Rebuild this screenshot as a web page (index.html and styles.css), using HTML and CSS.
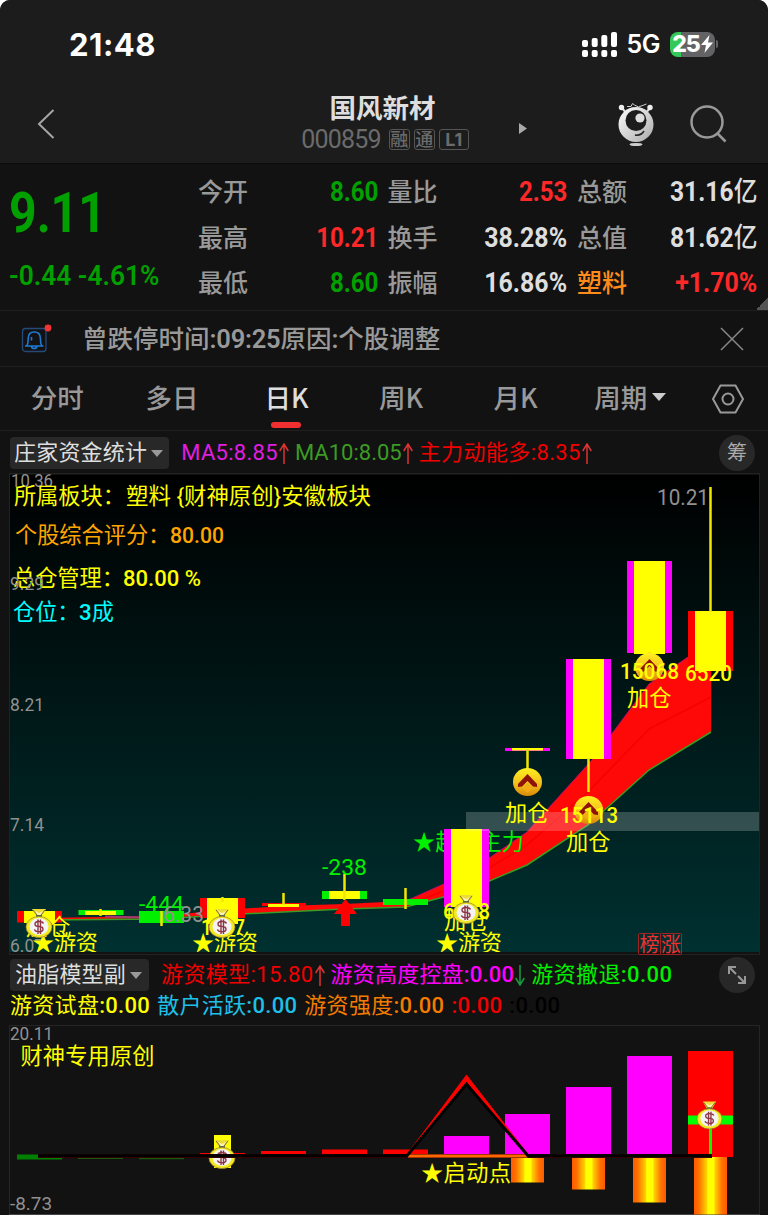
FILE: index.html
```html
<!DOCTYPE html>
<html lang="zh-CN">
<head>
  <meta charset="UTF-8" />
  <meta name="viewport" content="width=device-width, initial-scale=1.0"/>
  <title>国风新材 000859</title>
  <link rel="stylesheet" href="styles.css">
</head>

<body>
  <div class="screen">
    <header>
      <!-- Status bar -->
      <div class="status-bar">
        <span class="clock">21:48</span>
        <div class="status-icons">
          <svg class="signal" width="36" height="25" viewBox="0 0 36 25" fill="#fff">
            <rect x="0" y="8" width="6" height="7" rx="2"/><rect x="9.7" y="6" width="6" height="9" rx="2"/>
            <rect x="19.3" y="3" width="6" height="12" rx="2"/><rect x="29" y="0" width="6" height="15" rx="2"/>
            <rect x="0" y="18" width="6" height="7" rx="2"/><rect x="9.7" y="18" width="6" height="7" rx="2"/>
            <rect x="19.3" y="18" width="6" height="7" rx="2"/><rect x="29" y="18" width="6" height="7" rx="2"/>
          </svg>
          <span class="network">5G</span>
          <span class="battery">25<svg width="12" height="18" viewBox="0 0 12 18"><path d="M8.5 0 0 10h5L3.5 18 12 7.500H7z" fill="#fff"/></svg></span>
          <span class="battery-tip"></span>
        </div>
      </div>

      <!-- Stock title -->
      <div class="title-bar">
        <svg class="back" width="18" height="30" viewBox="0 0 18 30"><path d="M16.500 1 2 15l14.500 14" fill="none" stroke="#a5a5a5" stroke-width="2"/></svg>
        <div class="stock">
          <h1>国风新材</h1>
          <div class="stock-code"><span class="code">000859</span><i class="tag">融</i><i class="tag">通</i><i class="tag wide">L1</i></div>
        </div>
        <svg class="next" width="8" height="11" viewBox="0 0 8 11"><path d="M0 0l8 5.500L0 11z" fill="#aaa"/></svg>
        <svg class="robot" width="36" height="45" viewBox="0 0 36 45">
          <defs>
            <linearGradient id="ball" x1="0" y1="0" x2="1" y2="1"><stop offset="0" stop-color="#fff"/><stop offset="1" stop-color="#aaa"/></linearGradient>
          </defs>
          <path d="M4 6l5 6M32 6l-5 6" stroke="#ddd" stroke-width="2"/>
          <circle cx="3.500" cy="5.500" r="2.700" fill="#eee"/><circle cx="32" cy="5.500" r="2.700" fill="#eee"/>
          <path d="M9 4.500h4l1.500-3 2 1.500 4 2 8-3" fill="none" stroke="#ccc" stroke-width="1"/>
          <circle cx="18" cy="22.500" r="17.500" fill="url(#ball)"/>
          <circle cx="18" cy="18.500" r="10.500" fill="#1c1c1c"/>
          <circle cx="22" cy="16" r="4.600" fill="#ddd"/>
          <path d="M17 33q6 1 9-4" fill="none" stroke="#222" stroke-width="1.500"/>
          <ellipse cx="18" cy="42.500" rx="6.500" ry="1.600" fill="#ccc"/>
        </svg>
        <svg class="search" width="37" height="38" viewBox="0 0 37 38" fill="none" stroke="#999" stroke-width="2.500"><circle cx="17" cy="17" r="15.500"/><path d="M27.500 28.500l8 8"/></svg>
      </div>
    </header>

    <!-- Quote -->
    <section class="quote">
      <div class="price-box">
        <div class="price">9.11</div>
        <div class="change">-0.44 -4.61%</div>
      </div>
      <div class="quote-grid">
        <div class="cell"><span>今开</span><b class="down">8.60</b></div>
        <div class="cell"><span>量比</span><b class="up">2.53</b></div>
        <div class="cell"><span>总额</span><b class="amount">31.16<em>亿</em></b></div>
        <div class="cell"><span>最高</span><b class="up">10.21</b></div>
        <div class="cell"><span>换手</span><b class="percent">38.28%</b></div>
        <div class="cell"><span>总值</span><b class="amount">81.62<em>亿</em></b></div>
        <div class="cell"><span>最低</span><b class="down">8.60</b></div>
        <div class="cell"><span>振幅</span><b class="percent">16.86%</b></div>
        <div class="cell"><span class="sector">塑料</span><b class="up percent">+1.70%</b></div>
      </div>
    </section>

    <!-- Notice -->
    <section class="notice">
      <svg width="32" height="30" viewBox="0 0 32 30" fill="none">
        <rect x="1.500" y="4.500" width="23.500" height="23" rx="3" stroke="#254a78" stroke-width="1.300"/>
        <path d="M4 22h18.500M6 21.500c1.200-2 1.200-4 1.200-7 0-4.500 2.700-6.500 6-6.500s6.200 2 6.200 6.500c0 3 0 5 1.200 7M10.500 22.500c.5 2.700 4.800 2.700 5.300 0M10.500 16.500v-3.500" stroke="#1f7ad6" stroke-width="1.600"/>
        <circle cx="27" cy="4" r="3.400" fill="#f03535"/>
      </svg>
      <p>曾跌停时间<b>:09:25</b>原因<b>:</b>个股调整</p>
      <svg class="close" width="24" height="24" viewBox="0 0 24 24"><path d="M1 1l22 22M23 1L1 23" stroke="#888" stroke-width="1.500"/></svg>
    </section>

    <!-- Period tabs -->
    <nav class="tabs">
      <a>分时</a>
      <a>多日</a>
      <a class="active">日K</a>
      <a>周K</a>
      <a>月K</a>
      <a>周期<i class="caret"></i></a>
      <svg width="32" height="30" viewBox="0 0 32 30" fill="none" stroke="#999" stroke-width="2"><path d="M8.500 1.500h15L31 15l-7.500 13.500h-15L1 15z"/><circle cx="16" cy="15" r="5.500"/></svg>
    </nav>

    <!-- Main chart -->
    <div class="indicator main-indicator">
      <span class="select">庄家资金统计<i class="caret"></i></span>
      <span class="value ma5">MA5:8.85</span><svg class="arrow" width="10" height="21" viewBox="0 0 10 21"><path d="M5 21V1M.7 8 5 1l4.300 7" stroke="#d33"/></svg>
      <span class="value ma10">MA10:8.05</span><svg class="arrow" width="10" height="21" viewBox="0 0 10 21"><path d="M5 21V1M.7 8 5 1l4.300 7" stroke="#d33"/></svg>
      <span class="value red">主力动能多:8.35</span><svg class="arrow" width="10" height="21" viewBox="0 0 10 21"><path d="M5 21V1M.7 8 5 1l4.300 7" stroke="#d33"/></svg>
      <span class="round">筹</span>
    </div>

    <svg class="chart" width="751" height="483" viewBox="9 473 751 483">
      <defs>
        <linearGradient id="sea" x1="0" y1="0" x2="0" y2="1"><stop offset="0" stop-color="#000"/><stop offset="1" stop-color="#003030"/></linearGradient>
        <linearGradient id="gold" x1="0" y1="0" x2="0" y2="1"><stop offset="0" stop-color="#ffef20"/><stop offset=".55" stop-color="#f3bf1c"/><stop offset="1" stop-color="#d98a08"/></linearGradient>
        <clipPath id="plot"><rect x="10" y="475" width="749" height="477"/></clipPath>
        <symbol id="bag" viewBox="0 0 28 30">
          <path d="M7 1h14l-4 7h-6z" fill="#eddc35"/>
          <path d="M10 3l4 2 4-2-2 4h-4z" fill="#f8f4b8"/>
          <path d="M8 2l4 5M20 2l-4 5" stroke="#866a28"/>
          <rect x="11" y="7" width="6" height="3" fill="#577044"/>
          <ellipse cx="14" cy="19" rx="13" ry="10.500" fill="#f2ea20" stroke="#9b7b3b" stroke-width=".7"/>
          <ellipse cx="14" cy="18.500" rx="9.500" ry="8.500" fill="#f3f3f3"/>
          <path d="M18.500 15.500q-1-2-4.500-2-4 0-4 2.500t4 2.500 4 2.700-4 2.500q-4 0-4.500-2.300M13 11.500v14.500M15.500 11.500v14.500" fill="none" stroke="#8e3545" stroke-width="1.400"/>
        </symbol>
        <symbol id="coin" viewBox="0 0 29 28">
          <ellipse cx="14.500" cy="14" rx="14.500" ry="14" fill="url(#gold)"/>
          <path d="M14.500 6 24 16v3l-4-.5-5.500-5.500L9 18.500l-4 .5v-3z" fill="#8e1208"/>
          <path d="M14.500 15l5 5-5 5-5-5z" fill="#f2ad16"/>
        </symbol>
      </defs>
      <rect x="9.500" y="473.500" width="750" height="481" fill="#121212" stroke="#222"/>
      <rect x="10" y="475" width="749" height="477" fill="url(#sea)"/>

      <g class="axis">
        <text x="11" y="487" textLength="42" lengthAdjust="spacingAndGlyphs">10.36</text>
        <text x="10" y="711" textLength="34" lengthAdjust="spacingAndGlyphs">8.21</text>
        <text x="10" y="831" textLength="34" lengthAdjust="spacingAndGlyphs">7.14</text>
        <text x="10" y="952" textLength="34" lengthAdjust="spacingAndGlyphs">6.07</text>
        <text class="high" x="657" y="505" textLength="52" lengthAdjust="spacingAndGlyphs">10.21</text>
      </g>

      <g class="label">
        <text class="yellow" x="14" y="504">所属板块：</text>
        <text class="yellow" x="126" y="504" textLength="245" lengthAdjust="spacingAndGlyphs">塑料 {财神原创}安徽板块</text>
        <text class="orange" x="15" y="543">个股综合评分：</text>
        <text class="orange num" x="170" y="543" textLength="54" lengthAdjust="spacingAndGlyphs">80.00</text>
        <text class="yellow" x="13" y="586">总仓管理：</text>
        <text class="yellow num" x="123" y="586" textLength="78" lengthAdjust="spacingAndGlyphs">80.00 %</text>
        <text class="cyan" x="13" y="620">仓位：</text>
        <text class="cyan" x="79" y="620"><tspan class="num">3</tspan>成</text>
      </g>
      <text class="axis" x="10" y="590" textLength="34" lengthAdjust="spacingAndGlyphs">9.29</text>

      <g class="label" clip-path="url(#plot)">
        <!-- Trend ribbon -->
        <path d="M39 918 100 917 161 916 222 910 283 906 344 904 406 901 466 874 527 832 592 760 611 735 649 684 711 641V732L649 770 588 825 527 865 466 891 406 907 344 909 283 912 222 915 161 918 100 919 39 919z" fill="#ff0808"/>
        <path d="M39 920 161 919 222 915 283 912 344 909 406 907 466 891 527 865 588 825 649 770 711 732" fill="none" stroke="#3c9b23" stroke-width="1.500"/>
        <path d="M406 901 466 874 527 832 592 760 611 735 649 684 688 657" fill="none" stroke="#c20a65"/>
        <path d="M406 906 466 882 527 845 588 792 649 729 711 697" fill="none" stroke="#f80000" stroke-width="1.500"/>
        <path d="M105 916.500 161 918" stroke="#a03a70" stroke-width="2"/>
        <text class="green" x="413" y="850" textLength="111">★超级主力</text>

        <!-- Candles -->
        <path d="M17 911h45v11.500H17zM200 898h45v20h-45zM262 903h44v3h-44zM688 611h45v60h-45z" fill="#f00"/>
        <path d="M78.500 910h45v5h-45zM139 911h45v12h-45zM322 891h45v8h-45zM383 899h45v6h-45z" fill="#00f000"/>
        <path d="M444 829h45v78h-45zM505 748h45v3h-45zM566 659h45v100h-45zM627 561h45v92h-45z" fill="#f0f"/>
        <path d="M24 911h31v12H24zM85 911h31v4H85zM207 898h31v26h-31zM268 904h31v3h-31zM329 891h31v8h-31zM451 829h31v78h-31zM512 748h31v2.500h-31zM573 659h31v100h-31zM634 561h31v93h-31zM695 611h31v60h-31z" fill="#ff0"/>
        <path d="M100.500 909v7M161.500 911v15M222.500 897v5M283.500 893v12M344.500 874v26M405.500 888v21M527.500 749v20M588.500 758v34M649.500 652v6M710.500 487v125" stroke="#f2e600" stroke-width="2.500"/>
        <path d="M466 812h293v19H466z" fill="#fff" fill-opacity=".2"/>
        <path d="M345.500 899 357 914h-7v12h-9v-12h-7z" fill="#f00"/>

        <text class="green" x="139" y="912" textLength="45" lengthAdjust="spacingAndGlyphs">-444</text>
        <text class="axis high" x="163" y="922" textLength="41" lengthAdjust="spacingAndGlyphs">6.33</text>
        <text class="green" x="322" y="875" textLength="45" lengthAdjust="spacingAndGlyphs">-238</text>

        <!-- Coins and signals -->
        <use href="#coin" x="513" y="768" width="29" height="28"/>
        <use href="#coin" x="574" y="796" width="29" height="28"/>
        <use href="#coin" x="635" y="653" width="29" height="28"/>
        <g class="yellow">
          <text x="505" y="821">加仓</text>
          <text class="num" x="560" y="823" textLength="58" lengthAdjust="spacingAndGlyphs">15113</text>
          <text x="566" y="850">加仓</text>
          <text class="num" x="620" y="679" textLength="59" lengthAdjust="spacingAndGlyphs">15068</text>
          <text x="627" y="706">加仓</text>
          <text class="num" x="685" y="681" textLength="47" lengthAdjust="spacingAndGlyphs">6520</text>
          <text x="26" y="935">加仓</text>
          <text class="num" x="201" y="935" textLength="44" lengthAdjust="spacingAndGlyphs">1907</text>
          <text class="num" x="443" y="919" textLength="47" lengthAdjust="spacingAndGlyphs">6008</text>
          <text x="444" y="929">加仓</text>
          <text x="32" y="951" textLength="66">★游资</text>
          <text x="192" y="951" textLength="66">★游资</text>
          <text x="436" y="951" textLength="66">★游资</text>
        </g>
        <use href="#bag" x="25" y="908" width="28" height="30"/>
        <use href="#bag" x="208" y="908" width="28" height="30"/>
        <use href="#bag" x="452" y="894" width="28" height="30"/>
      </g>
      <g class="badges">
        <rect x="638.500" y="933.500" width="22" height="21" rx="1"/><rect x="660.500" y="933.500" width="21" height="21" rx="1"/>
        <text x="639.500" y="952">榜</text><text x="661" y="952">涨</text>
      </g>
    </svg>

    <!-- Sub chart -->
    <div class="indicator sub-indicator">
      <span class="select">油脂模型副<i class="caret"></i></span>
      <span class="value red">游资模型:15.80</span><svg class="arrow" width="10" height="21" viewBox="0 0 10 21"><path d="M5 21V1M.7 8 5 1l4.300 7" stroke="#d33"/></svg>
      <span class="value magenta">游资高度控盘<b>:0.00</b></span><svg class="arrow" width="10" height="21" viewBox="0 0 10 21"><path d="M5 0v20M.7 13 5 20l4.300-7" stroke="#1c9a40"/></svg>
      <span class="value lime">游资撤退<b>:0.00</b></span>
      <span class="round"><svg width="20" height="20" viewBox="0 0 20 20" fill="none" stroke="#999" stroke-width="2"><path d="M2 9V2h7M2 2l7 7M18 11v7h-7M18 18l-7-7"/></svg></span>
    </div>
    <div class="indicator values-row">
      <span class="value yellow">游资试盘<b>:0.00</b></span>
      <span class="value sky">散户活跃<b>:0.00</b></span>
      <span class="value amber">游资强度<b>:0.00</b></span>
      <span class="value red"><b>:0.00</b></span>
      <span class="value black"><b>:0.00</b></span>
    </div>

    <svg class="chart" width="751" height="190" viewBox="9 1025 751 190">
      <defs>
        <linearGradient id="fire"><stop offset="0" stop-color="#ff5a00"/><stop offset=".15" stop-color="#ff7200"/><stop offset=".38" stop-color="#ffd000"/><stop offset=".42" stop-color="#ff0"/><stop offset=".6" stop-color="#ff0"/><stop offset=".64" stop-color="#ffd000"/><stop offset=".85" stop-color="#ff7200"/><stop offset="1" stop-color="#ff5a00"/></linearGradient>
      </defs>
      <path d="M9.500 1215V1025.500h750V1215" fill="none" stroke="#252525"/>
      <path d="M9 1214.500h751" stroke="#444"/>
      <g class="axis">
        <text x="10" y="1040" textLength="43" lengthAdjust="spacingAndGlyphs">20.11</text>
        <text x="10" y="1210" textLength="42" lengthAdjust="spacingAndGlyphs">-8.73</text>
      </g>
      <path d="M17 1154.500h21v3h24v2H17z" fill="#008000"/>
      <path d="M78 1158h45v1H78zM139 1158h45v1.300h-45z" fill="#165c0b"/>
      <path d="M200 1153h45v2h-45zM261 1151h45v3.500h-45zM322 1149.500h45v5h-45zM383 1149.500h45v5h-45zM688 1051h45v106h-45z" fill="#f00"/>
      <path d="M444 1136h45v20h-45zM505 1114h45v41h-45zM566 1087h45v68h-45zM627 1056h45v99h-45z" fill="#f0f"/>
      <path d="M214 1135h17v33h-17z" fill="#ff0"/>
      <use href="#bag" x="208" y="1139" width="28" height="30"/>
      <rect x="511" y="1157" width="33" height="25.500" fill="url(#fire)"/>
      <rect x="572" y="1157" width="33" height="32.500" fill="url(#fire)"/>
      <rect x="633" y="1157" width="33" height="45.500" fill="url(#fire)"/>
      <rect x="694" y="1157" width="33" height="57.500" fill="url(#fire)"/>
      <path d="M38 1156H712" stroke="#400" stroke-width="4"/>
      <path d="M408 1156h120" stroke="#ff6800" stroke-width="3"/>
      <path d="M406 1155 466.500 1074.500 529 1155 466.500 1083z" fill="#f00"/>
      <path d="M38 1155.700h369l59.500-71.700 61.500 71.700h184" fill="none" stroke="#000" stroke-width="3"/>
      <path d="M688 1115.500h45v9h-45zM709 1120h3v34h-3z" fill="#0f0"/>
      <use href="#bag" x="696" y="1100" width="27" height="30"/>
      <g class="label yellow">
        <text x="20.500" y="1064" textLength="134">财神专用原创</text>
        <text x="421" y="1181" textLength="90">★启动点</text>
      </g>
    </svg>
  </div>
</body>
</html>
```
FILE: styles.css
```css
* {
  box-sizing: border-box;
}

body {
  margin: 0;
  background: #fff;
  color: #999;
  font-family: Roboto, 'Noto Sans CJK SC', sans-serif;
}

.screen {
  width: 768px;
  height: 1215px;
  background: #121212;
  border-radius: 10px 10px 0 0;
  overflow: hidden;
}

svg {
  display: block;
  flex: none;
}

i, em {
  font-style: normal;
}

header {
  height: 163px;
  background: #1c1c1c;
}

/* Status bar */
.status-bar {
  display: flex;
  justify-content: space-between;
  align-items: center;
  height: 88px;
  padding: 0 50px 0 69px;
  color: #fff;
  font-family: Inter, sans-serif;
}

.clock {
  font-size: 31px;
  font-weight: 700;
  letter-spacing: 0.5px;
}

.status-icons {
  display: flex;
  align-items: center;
}

.network {
  margin: 0 10px 0 9px;
  font-size: 25px;
  font-weight: 600;
  letter-spacing: -0.5px;
}

.battery {
  display: flex;
  align-items: center;
  justify-content: center;
  width: 45px;
  height: 25px;
  border-radius: 8px;
  background: linear-gradient(90deg, #34c759 25%, #636366 25%);
  font-size: 23px;
  font-weight: 800;
  letter-spacing: -1.2px;
}

.battery svg {
  margin-left: 1px;
}

.battery-tip {
  width: 2px;
  height: 8px;
  margin-left: 1px;
  border-radius: 0 3px 3px 0;
  background: #636366;
}

/* Title */
.title-bar {
  display: flex;
  align-items: center;
  height: 72px;
  padding-left: 37px;
}

.stock {
  width: 290px;
  margin-left: 184px;
  text-align: center;
}

.stock h1 {
  margin: 0 3px 0 0;
  color: #dedede;
  font-size: 26.500px;
  font-weight: 700;
  line-height: 31px;
}

.stock-code {
  display: flex;
  align-items: center;
  justify-content: center;
  height: 32px;
  padding-left: 2px;
}

.code {
  margin-right: 8px;
  color: #6b6b6b;
  font-size: 25px;
  letter-spacing: -0.8px;
}

.tag {
  width: 21px;
  height: 21px;
  margin-right: 4px;
  border: 1px solid #555;
  border-radius: 3px;
  color: #6b6b6b;
  font-size: 18px;
  font-weight: 500;
  line-height: 19px;
}

.tag.wide {
  width: 30px;
  margin-right: 0;
  font-family: Inter, sans-serif;
  font-weight: 700;
}

.next {
  margin: 8px 0 0 -10px;
}

.robot {
  margin-left: 91px;
}

.search {
  margin-left: 36px;
}

/* Quote */
.quote {
  display: flex;
  height: 148px;
  padding-top: 5px;
  border-top: 1px solid #0b0b0b;
  border-bottom: 1px solid #1f1f1f;
  background: linear-gradient(135deg, transparent 50%, #555 50%) right bottom / 12px 12px no-repeat;
}

.price-box {
  width: 198px;
  padding-left: 9px;
  color: #00a000;
  white-space: nowrap;
}

.price,
.change {
  transform: scaleX(0.86);
  transform-origin: left;
}

.price {
  margin-top: 11px;
  font-size: 56px;
  font-weight: 700;
  line-height: 66px;
}

.change {
  margin-top: 14px;
  font-size: 28px;
  font-weight: 600;
  line-height: 32px;
  transform: scaleX(0.94);
}

.quote-grid {
  display: grid;
  grid-template-columns: 180px 180px 180px;
  grid-auto-rows: 45.500px;
  column-gap: 9.500px;
}

.cell {
  display: flex;
  justify-content: space-between;
  align-items: baseline;
  font-size: 25px;
  font-weight: 500;
  line-height: 45px;
}

.cell b {
  color: #dedede;
  font-size: 28px;
  font-weight: 700;
  transform: scaleX(0.86);
  transform-origin: right;
}

.cell .amount {
  transform: scaleX(0.88);
}

.cell .percent {
  transform: scaleX(0.89);
}

.cell em {
  font-size: 27px;
  font-weight: 500;
}

.cell .up {
  color: #ff2828;
}

.cell .down {
  color: #00a000;
}

.sector {
  color: #ff8c1a;
}

/* Notice */
.notice {
  display: flex;
  align-items: center;
  height: 56px;
  padding: 0 24px 0 21px;
  border-bottom: 1px solid #1f1f1f;
}

.notice p {
  margin: 0 0 0 29px;
  font-size: 25.500px;
  font-weight: 500;
  line-height: 56px;
}

.notice b {
  font-weight: 600;
  letter-spacing: -0.2px;
}

.close {
  margin-left: auto;
}

/* Period tabs */
.tabs {
  display: flex;
  align-items: center;
  height: 64px;
  border-bottom: 1px solid #1f1f1f;
  font-family: 'Noto Sans CJK SC', sans-serif;
  font-size: 26.500px;
  font-weight: 500;
}

.tabs a {
  position: relative;
  display: flex;
  align-items: center;
  justify-content: center;
  width: 114.600px;
  height: 60px;
  padding-bottom: 4px;
}

.tabs .active {
  color: #dedede;
}

.active::after {
  position: absolute;
  bottom: 1px;
  width: 30px;
  height: 6px;
  border-radius: 3px;
  background: #f03030;
  content: "";
}

.tabs .caret {
  margin-left: 5px;
  border-top-color: #ccc;
}

.tabs svg {
  margin-left: 24.400px;
}

.caret {
  border: 7.500px solid transparent;
  border-top: 8px solid #999;
  border-bottom: 0;
}

/* Indicator values */
.indicator {
  display: flex;
  align-items: center;
  padding: 0 13px 0 10px;
  font-size: 22px;
  line-height: 34px;
  white-space: nowrap;
}

.main-indicator {
  height: 42px;
  padding-top: 2px;
}

.sub-indicator {
  height: 38px;
}

.values-row {
  gap: 7px;
  height: 31px;
  padding-bottom: 8px;
}

.value {
  letter-spacing: 0.4px;
}

.value b {
  font-weight: 500;
}

.values-row .value {
  letter-spacing: 0.3px;
}

.select {
  display: flex;
  align-items: center;
  height: 32px;
  margin-right: 12px;
  padding: 0 6px 0 4px;
  border-radius: 4px;
  background: #282828;
  color: #dedede;
  letter-spacing: 0.2px;
}

.sub-indicator .select {
  padding: 0 7px 0 5px;
}

.select .caret {
  margin-left: 4px;
  border-width: 7px 6.500px 0;
}

.arrow {
  margin: 0 6px 0 1px;
  fill: none;
  stroke-width: 1.500;
}

.round {
  display: flex;
  align-items: center;
  justify-content: center;
  width: 36px;
  height: 36px;
  margin-left: auto;
  border-radius: 50%;
  background: #282828;
  color: #aaa;
  font-size: 20px;
}

.ma5 { color: #e01ee0; letter-spacing: 0.3px; }
.ma10 { color: #3c9b23; letter-spacing: 0; }
.red { color: #f00000; }
.magenta { color: #f0f; letter-spacing: 0.2px; }
.lime { color: #00f000; }
.yellow { color: #ff0; fill: #ff0; }
.sky { color: #1ec0e8; }
.amber { color: #f57c00; }
.black { color: #000; }
.orange { fill: #ffa500; }
.cyan { fill: #0ff; }
.green { fill: #00f000; }

/* Charts */
.chart {
  margin-left: 9px;
  font-size: 22.200px;
}

.axis {
  fill: #919191;
  font-size: 18.500px;
}

.high {
  font-size: 22px;
}

.num {
  font-weight: 500;
}

.badges rect {
  fill: none;
  stroke: #a02323;
}

.badges text {
  fill: #ef3030;
  font-size: 20px;
}
```
